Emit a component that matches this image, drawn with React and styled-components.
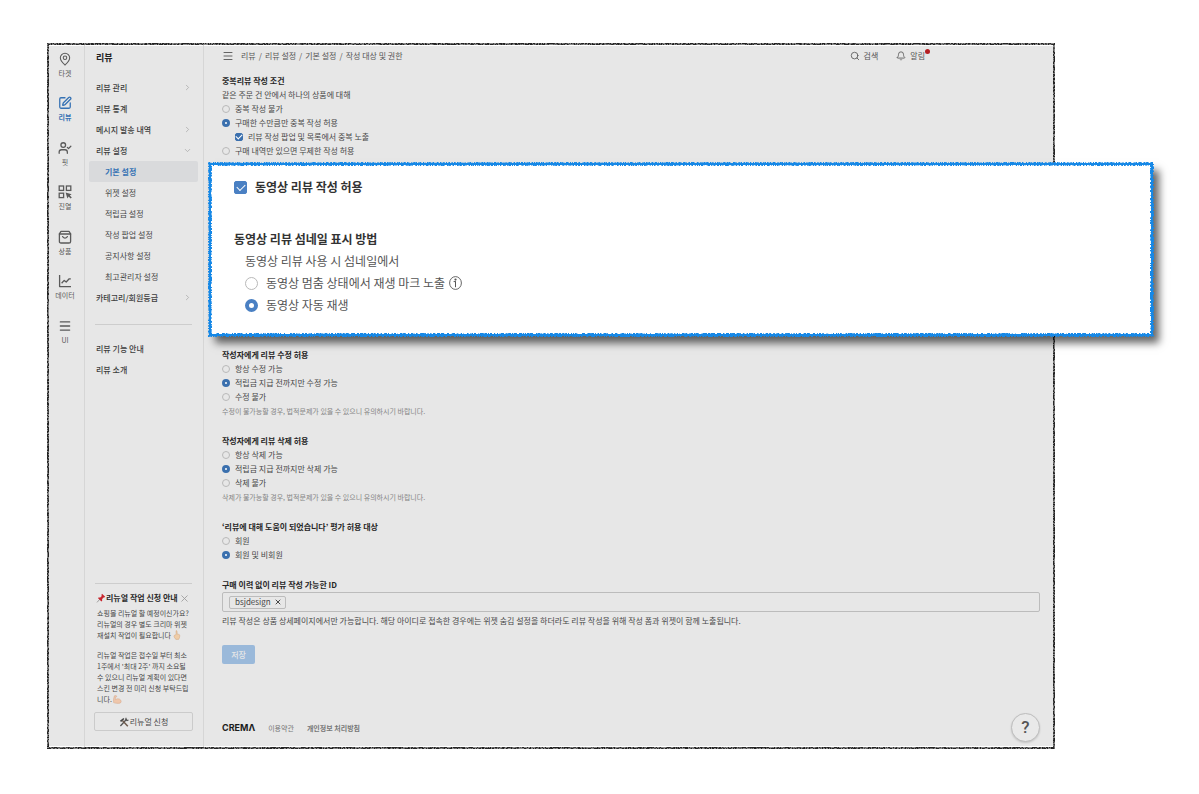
import React, { useState } from 'react';
import styled, { createGlobalStyle, css } from 'styled-components';
import { MapPin, SquarePen, UserCheck, Menu, Search, Bell, ChevronRight, ChevronDown, X } from 'lucide-react';

const GlobalStyle = createGlobalStyle`
    * {
        box-sizing: border-box;
    }

    body {
        margin: 0;
        background: #fff;
        color: #484848;
        font-family: 'Noto Sans CJK KR', sans-serif;
        font-size: 8px;
        line-height: 14px;
    }

    button, input {
        font: inherit;
        color: inherit;
        margin: 0;
    }

    a {
        color: inherit;
        text-decoration: none;
    }

    svg {
        flex-shrink: 0;
    }
`;

const Page = styled.div`
    padding: 43px 144px 45px 47px;
`;

const Frame = styled.div`
    position: relative;
    display: flex;
    min-height: calc(100vh - 88px);
    padding: 2px;
    background: #e7e7e7;
    box-shadow: inset 0 3px 0 #fff, inset 0 -3px 0 #fff;
`;

/* Sketchy outline drawn over the edge of its parent */
const OutlineSvg = styled.svg`
    position: absolute;
    inset: 0;
    width: 100%;
    height: 100%;
    overflow: visible;
    pointer-events: none;

    rect {
        width: calc(100% - 2px);
        height: calc(100% - 2px);
    }
`;

/* ---------- Icon rail ---------- */

const Rail = styled.nav`
    width: 36px;
    padding-right: 3px;
    border-right: 1px solid #d6d6d6;
`;

const RailList = styled.div`
    display: grid;
    grid-template-rows: repeat(7, 1fr);
    height: 317px;
    padding-top: 6px;
`;

const RailLink = styled.a`
    display: flex;
    flex-direction: column;
    align-items: center;
    font-size: 7px;
    line-height: 12px;
    color: ${({ $active }) => ($active ? '#3672b4' : '#5a5a5a')};
    font-weight: ${({ $active }) => ($active ? 700 : 400)};

    svg {
        width: 14px;
        height: 16px;
    }
`;

/* ---------- Sidebar menu ---------- */

const Sidebar = styled.aside`
    display: flex;
    flex-direction: column;
    width: 119px;
    padding: 6px 5px 16px 4px;
    border-right: 1px solid #d6d6d6;
`;

const SidebarTitle = styled.h1`
    margin: 0 0 12px;
    padding-left: 7px;
    font-size: 9px;
    line-height: 14px;
    color: #222;
`;

const MenuLink = styled.a`
    display: flex;
    align-items: center;
    justify-content: space-between;
    height: 21px;
    padding: 0 6px 0 7px;
    border-radius: 2px;
    font-weight: 500;
    color: #3c3c3c;

    svg {
        color: #a8a8a8;
    }

    ${({ $sub }) => $sub && css`
        padding-left: 16px;
        font-weight: 400;
        color: #484848;
    `}

    ${({ $active }) => $active && css`
        background: #d9dadc;
        font-weight: 700;
        color: #3672b4;
    `}
`;

const Divider = styled.hr`
    width: auto;
    height: 1px;
    margin: ${({ $spaced }) => ($spaced ? '16px 6px 13px' : '0 6px')};
    border: 0;
    background: #cdcdcd;
`;

const Notice = styled.section`
    margin-top: auto;
    font-size: 7px;
    line-height: 11px;

    p {
        margin: 0 0 9px;
        padding: 0 0 0 8px;
        white-space: nowrap;
    }

    p svg {
        vertical-align: -2px;
    }
`;

const NoticeHead = styled.header`
    display: flex;
    align-items: center;
    justify-content: space-between;
    margin: 7px 0 3px;
    padding: 0 8px 0 7px;

    h2 {
        display: flex;
        align-items: center;
        margin: 0;
        font-size: 8px;
        line-height: 14px;
        color: #2a2a2a;
    }
`;

const IconButton = styled.button`
    display: flex;
    padding: 0;
    border: 0;
    background: none;
    color: #999;
    cursor: pointer;
`;

const NoticeButton = styled.button`
    display: flex;
    align-items: center;
    justify-content: center;
    gap: 1px;
    width: calc(100% - 10px);
    height: 19px;
    margin: -2px 5px 0;
    padding: 0;
    border: 1px solid #cbcbcb;
    border-radius: 2px;
    background: transparent;
    font-size: 8px;
    cursor: pointer;
`;

/* ---------- Main ---------- */

const Main = styled.main`
    display: flex;
    flex: 1;
    flex-direction: column;
    min-width: 0;
    padding: 0 13px 5px 18px;
`;

const TopBar = styled.header`
    display: flex;
    align-items: center;
    height: 22px;
    margin-bottom: 7px;
    padding-right: 115px;
`;

const Breadcrumb = styled.nav`
    display: flex;
    gap: 3px;
    margin: 0 auto 0 7px;
    color: #555;
`;

const TopLink = styled.a`
    position: relative;
    display: flex;
    align-items: center;
    gap: 4px;
    margin-left: 18px;
    color: #555;
`;

const Dot = styled.span`
    position: absolute;
    top: 0;
    right: -5px;
    width: 5px;
    height: 5px;
    border-radius: 50%;
    background: #b51f24;
`;

const Group = styled.fieldset`
    min-width: 0;
    margin: 0 0 16px;
    padding: 0;
    border: 0;

    legend {
        padding: 0;
        font-weight: 700;
        color: #262626;
    }

    p {
        margin: 0;
    }
`;

const Hint = styled.p`
    font-size: 7px;
    color: #858585;
`;

const Option = styled.label`
    display: flex;
    align-items: center;
    gap: ${({ $large }) => ($large ? '8px' : '5px')};
    padding-left: ${({ $nested }) => ($nested ? '13px' : '0')};
    font-weight: ${({ $strong }) => ($strong ? 700 : 400)};
    color: ${({ $strong }) => ($strong ? '#333' : 'inherit')};
`;

const OptionText = styled.span`
    display: flex;
    align-items: center;
    gap: 4px;
`;

const Radio = styled.input.attrs({ type: 'radio' })`
    flex-shrink: 0;
    width: ${({ $large }) => ($large ? '13px' : '8px')};
    height: ${({ $large }) => ($large ? '13px' : '8px')};
    appearance: none;
    border: 1px solid #b9b9b9;
    border-radius: 50%;
    background: transparent;

    &:checked {
        border: ${({ $large }) => ($large ? '4px solid #4a80c3' : '3px solid #3b70ae')};
        background: #fff;
    }
`;

const Checkbox = styled.input.attrs({ type: 'checkbox' })`
    display: grid;
    place-items: center;
    flex-shrink: 0;
    width: ${({ $large }) => ($large ? '13px' : '8px')};
    height: ${({ $large }) => ($large ? '13px' : '8px')};
    appearance: none;
    border: 1px solid #b9b9b9;
    border-radius: 2px;

    &:checked {
        border-color: ${({ $large }) => ($large ? '#4a80c3' : '#3b70ae')};
        background: ${({ $large }) => ($large ? '#4a80c3' : '#3b70ae')};
    }

    &:checked::after {
        content: '';
        width: ${({ $large }) => ($large ? '7px' : '5px')};
        height: ${({ $large }) => ($large ? '4px' : '3px')};
        border: solid #fff;
        border-width: 0 0 1px 1px;
        transform: translateY(-1px) rotate(-45deg);
    }
`;

const Spotlight = styled.section`
    position: relative;
    z-index: 1;
    margin: -11px -113px 12px -13px;
    padding: 13px 24px 20px 25px;
    background: #fff;
    box-shadow: 6px 7px 8px rgba(0, 0, 0, 0.6);
    font-size: 12px;
    line-height: 22px;
    color: #555;

    ${Group} {
        margin: 30px 0 0;
    }

    legend {
        color: #333;
    }
`;

const Indent = styled.div`
    padding-left: 11px;
`;

const Field = styled.div`
    display: flex;
    align-items: center;
    height: 20px;
    margin-bottom: 2px;
    padding: 0 6px;
    border: 1px solid #bcbcbc;
    border-radius: 2px;

    input {
        flex: 1;
        min-width: 0;
        border: 0;
        outline: 0;
        background: transparent;
    }
`;

const Tag = styled.span`
    display: flex;
    align-items: center;
    gap: 3px;
    height: 13px;
    padding: 0 3px 0 5px;
    border: 1px solid #bcbcbc;
    border-radius: 2px;
`;

const FieldLabel = styled.label`
    font-weight: 700;
    color: #262626;
`;

const SaveButton = styled.button`
    width: 33px;
    height: 19px;
    margin-top: 17px;
    padding: 0;
    border: 0;
    border-radius: 2px;
    background: #9ab9da;
    color: #e7e7e7;
    font-weight: 500;
    line-height: 19px;
`;

const Footer = styled.footer`
    display: flex;
    align-items: center;
    gap: 13px;
    margin-top: auto;
    font-size: 7px;
    color: #777;
`;

const Logo = styled.a`
    font-family: Inter, sans-serif;
    font-size: 9px;
    font-weight: 700;
    color: #1c1c1c;
`;

const HelpButton = styled.button`
    width: 29px;
    height: 29px;
    margin-left: auto;
    padding: 0;
    border: 1px solid #bdbdbd;
    border-radius: 50%;
    background: #e9e9e9;
    box-shadow: 0 1px 2px rgba(0, 0, 0, 0.15);
    font-family: Roboto, sans-serif;
    font-size: 17px;
    font-weight: 500;
    line-height: 27px;
    color: #555;
`;

/* ---------- Drawings ---------- */

/* A thin solid core with a wider speckled stroke over it */
const Outline = ({ id, color, width, core, coreWidth }) => (
    <OutlineSvg aria-hidden="true">
        <filter id={id} x="-10" y="-10" width="3000" height="2000" filterUnits="userSpaceOnUse" colorInterpolationFilters="sRGB">
            <feTurbulence type="fractalNoise" baseFrequency="0.7" numOctaves="2" seed="4" />
            <feColorMatrix values="0 0 0 0 0  0 0 0 0 0  0 0 0 0 0  7 0 0 0 -2.9" result="speckle" />
            <feComposite in="SourceGraphic" in2="speckle" operator="in" />
        </filter>
        <rect x="1" y="1" fill="none" stroke={core} strokeWidth={coreWidth} />
        <rect x="1" y="1" fill="none" stroke={color} strokeWidth={width} filter={`url(#${id})`} />
    </OutlineSvg>
);

const stroke = { fill: 'none', stroke: 'currentColor', strokeWidth: 1.3 };

const DisplayIcon = () => (
    <svg viewBox="0 0 14 16" {...stroke}>
        <rect x="1.2" y="2" width="4.4" height="4.4" />
        <rect x="8.4" y="2" width="4.4" height="4.4" />
        <rect x="1.2" y="9.2" width="4.4" height="4.4" />
        <path d="M7.6 8.4l6 1.8-1.8 1.2 2 2-1.2 1.2-2-2-1.2 1.8z" fill="currentColor" stroke="none" />
    </svg>
);

const BagIcon = () => (
    <svg viewBox="0 0 14 16" {...stroke} strokeLinejoin="round" strokeLinecap="round">
        <path d="M1.4 4.8L3 2.4h8l1.6 2.4v7.6q0 1.6-1.6 1.6H3q-1.6 0-1.6-1.6z" />
        <path d="M1.4 5h11.2M4.6 7.6q2.4 3 4.8 0" />
    </svg>
);

const ChartIcon = () => (
    <svg viewBox="0 0 14 16" {...stroke} strokeLinejoin="round">
        <path d="M1.6 2v11.6H13M3.6 10.2l2.6-2.8 2 1.6 3-3.2h1.6" />
    </svg>
);

const PinIcon = () => (
    <svg width="10" height="10" viewBox="0 0 10 10">
        <path d="M4 6L1 9.4" stroke="#8d8d8d" strokeWidth="0.8" />
        <path d="M6 .8l3.2 3-1 .7-.6-.1-1.5 1.7.1 1.6-.8.8L1.9 5.1l.9-.7 1.5.1 1.5-1.6-.4-.9z" fill="#c8252d" />
    </svg>
);

const FingerIcon = () => (
    <svg width="8" height="10" viewBox="0 0 8 10">
        <path d="M3 .8q.8-.5 1 .4l.3 3 1.2.1q1.4.2 1.3 1.5L6.4 8 5.6 9.4H2.8L1 6.8l.4-1.6 1.7-.6z" fill="#efcda8" stroke="#c99a6f" strokeWidth="0.4" />
    </svg>
);

const MuscleIcon = () => (
    <svg width="9" height="9" viewBox="0 0 9 9">
        <path d="M1.4.8l1.8-.2.6 1.1-1.3.6-.2 2.4q2-1.6 4.1-.7 2 .9 1.8 2.9-.3 1.6-3.4 1.5Q2 8.4.6 7.6 0 4 1.4.8z" fill="#efc7ac" stroke="#cf9c7c" strokeWidth="0.4" />
    </svg>
);

const ToolsIcon = () => (
    <svg width="10" height="10" viewBox="0 0 10 10" fill="none">
        <path d="M1.4 9L7.8 2" stroke="#555" strokeWidth="1.3" />
        <path d="M7 .8l-.2 1.9 1.2.9 1.5-.7" stroke="#555" strokeWidth="1.1" />
        <path d="M3.4 3.4l5.4 5.8" stroke="#6e5a4c" strokeWidth="1.5" />
        <path d="M.9 3.8L4.4.9l1 1.2-3.3 3z" fill="#444" />
    </svg>
);

const InfoIcon = () => (
    <svg width="13" height="14" viewBox="0 0 13 14" fill="none" stroke="#555">
        <ellipse cx="6.5" cy="7" rx="5.9" ry="6.4" strokeWidth="0.9" />
        <path d="M6.5 5.2v6M4.6 5.6h1.9" strokeWidth="1" />
        <circle cx="6.5" cy="3.6" r="1.1" fill="#555" stroke="none" />
    </svg>
);

/* ---------- Data ---------- */

const railItems = [
    { label: '타겟', icon: <MapPin strokeWidth={1.8} /> },
    { label: '리뷰', icon: <SquarePen strokeWidth={2.2} />, active: true },
    { label: '핏', icon: <UserCheck strokeWidth={2.2} /> },
    { label: '진열', icon: <DisplayIcon /> },
    { label: '상품', icon: <BagIcon /> },
    { label: '데이터', icon: <ChartIcon /> },
    { label: 'UI', icon: <Menu strokeWidth={2.2} /> },
];

const menuItems = [
    { label: '리뷰 관리', arrow: 'right' },
    { label: '리뷰 통계' },
    { label: '메시지 발송 내역', arrow: 'right' },
    { label: '리뷰 설정', arrow: 'down' },
    { label: '기본 설정', sub: true, active: true },
    { label: '위젯 설정', sub: true },
    { label: '적립금 설정', sub: true },
    { label: '작성 팝업 설정', sub: true },
    { label: '공지사항 설정', sub: true },
    { label: '최고관리자 설정', sub: true },
    { label: '카테고리/회원등급', arrow: 'right' },
];

const thumbnailOptions = [
    { label: '동영상 멈춤 상태에서 재생 마크 노출', info: true },
    { label: '동영상 자동 재생' },
];

const editOptions = [
    { label: '항상 수정 가능' },
    { label: '적립금 지급 전까지만 수정 가능' },
    { label: '수정 불가' },
];

const deleteOptions = [
    { label: '항상 삭제 가능' },
    { label: '적립금 지급 전까지만 삭제 가능' },
    { label: '삭제 불가' },
];

const helpfulOptions = [{ label: '회원' }, { label: '회원 및 비회원' }];

// The second option is the default in every group
const RadioList = ({ name, options, large }) => {
    const [value, setValue] = useState(1);

    return options.map(({ label, info }, i) => (
        <Option key={label} $large={large}>
            <Radio name={name} $large={large} checked={value === i} onChange={() => setValue(i)} />
            <OptionText>
                {label}
                {info && <InfoIcon />}
            </OptionText>
        </Option>
    ));
};

const App = () => {
    const [duplicate, setDuplicate] = useState(1);

    return (
        <Page>
            <GlobalStyle />
            <Frame>
                <Outline id="rough-frame" color="#222" width={2} core="#8a8a8a" coreWidth={2} />
                <Rail>
                    <RailList>
                        {railItems.map(({ label, icon, active }) => (
                            <RailLink key={label} href="#" $active={active}>
                                {icon}
                                {label}
                            </RailLink>
                        ))}
                    </RailList>
                </Rail>

                <Sidebar>
                    <SidebarTitle>리뷰</SidebarTitle>
                    {menuItems.map(({ label, arrow, sub, active }) => (
                        <MenuLink key={label} href="#" $sub={sub} $active={active}>
                            {label}
                            {arrow === 'right' && <ChevronRight size={9} />}
                            {arrow === 'down' && <ChevronDown size={9} />}
                        </MenuLink>
                    ))}
                    <Divider $spaced />
                    <MenuLink href="#">리뷰 기능 안내</MenuLink>
                    <MenuLink href="#">리뷰 소개</MenuLink>

                    <Notice>
                        <Divider />
                        <NoticeHead>
                            <h2><PinIcon />리뉴얼 작업 신청 안내</h2>
                            <IconButton aria-label="닫기"><X size={11} strokeWidth={1.8} /></IconButton>
                        </NoticeHead>
                        <p>
                            쇼핑몰 리뉴얼 할 예정이신가요?<br />
                            리뉴얼의 경우 별도 크리마 위젯<br />
                            재설치 작업이 필요합니다 <FingerIcon />
                        </p>
                        <p>
                            리뉴얼 작업은 접수일 부터 최소<br />
                            1주에서 '최대 2주' 까지 소요될<br />
                            수 있으니 리뉴얼 계획이 있다면<br />
                            스킨 변경 전 미리 신청 부탁드립<br />
                            니다. <MuscleIcon />
                        </p>
                        <NoticeButton><ToolsIcon />리뉴얼 신청</NoticeButton>
                    </Notice>
                </Sidebar>

                <Main>
                    <TopBar>
                        <IconButton aria-label="메뉴"><Menu size={12} strokeWidth={1.8} color="#555" /></IconButton>
                        <Breadcrumb>
                            <a href="#">리뷰</a>/
                            <a href="#">리뷰 설정</a>/
                            <a href="#">기본 설정</a>/
                            <a href="#">작성 대상 및 권한</a>
                        </Breadcrumb>
                        <TopLink href="#"><Search size={10} />검색</TopLink>
                        <TopLink href="#"><Bell size={10} />알림<Dot /></TopLink>
                    </TopBar>

                    <Group>
                        <legend>중복리뷰 작성 조건</legend>
                        <p>같은 주문 건 안에서 하나의 상품에 대해</p>
                        <Option>
                            <Radio name="duplicate" checked={duplicate === 0} onChange={() => setDuplicate(0)} />
                            중복 작성 불가
                        </Option>
                        <Option>
                            <Radio name="duplicate" checked={duplicate === 1} onChange={() => setDuplicate(1)} />
                            구매한 수만큼만 중복 작성 허용
                        </Option>
                        <Option $nested>
                            <Checkbox defaultChecked />
                            리뷰 작성 팝업 및 목록에서 중복 노출
                        </Option>
                        <Option>
                            <Radio name="duplicate" checked={duplicate === 2} onChange={() => setDuplicate(2)} />
                            구매 내역만 있으면 무제한 작성 허용
                        </Option>
                    </Group>

                    <Spotlight>
                        <Outline id="rough-spotlight" color="#1688e6" width={4} core="#1688e6" coreWidth={2} />
                        <Option $large $strong>
                            <Checkbox $large defaultChecked />
                            동영상 리뷰 작성 허용
                        </Option>
                        <Group>
                            <legend>동영상 리뷰 섬네일 표시 방법</legend>
                            <Indent>
                                <p>동영상 리뷰 사용 시 섬네일에서</p>
                                <RadioList name="thumbnail" large options={thumbnailOptions} />
                            </Indent>
                        </Group>
                    </Spotlight>

                    <Group>
                        <legend>작성자에게 리뷰 수정 허용</legend>
                        <RadioList name="edit" options={editOptions} />
                        <Hint>수정이 불가능할 경우, 법적문제가 있을 수 있으니 유의하시기 바랍니다.</Hint>
                    </Group>

                    <Group>
                        <legend>작성자에게 리뷰 삭제 허용</legend>
                        <RadioList name="delete" options={deleteOptions} />
                        <Hint>삭제가 불가능할 경우, 법적문제가 있을 수 있으니 유의하시기 바랍니다.</Hint>
                    </Group>

                    <Group>
                        <legend>‘리뷰에 대해 도움이 되었습니다’ 평가 허용 대상</legend>
                        <RadioList name="helpful" options={helpfulOptions} />
                    </Group>

                    <FieldLabel htmlFor="reviewer-id">구매 이력 없이 리뷰 작성 가능한 ID</FieldLabel>
                    <Field>
                        <Tag>bsjdesign <X size={8} strokeWidth={3} /></Tag>
                        <input id="reviewer-id" type="text" />
                    </Field>
                    <div>리뷰 작성은 상품 상세페이지에서만 가능합니다. 해당 아이디로 접속한 경우에는 위젯 숨김 설정을 하더라도 리뷰 작성을 위해 작성 폼과 위젯이 함께 노출됩니다.</div>
                    <SaveButton disabled>저장</SaveButton>

                    <Footer>
                        <Logo href="#">CREMΛ</Logo>
                        <a href="#">이용약관</a>
                        <a href="#"><b>개인정보 처리방침</b></a>
                        <HelpButton aria-label="도움말">?</HelpButton>
                    </Footer>
                </Main>
            </Frame>
        </Page>
    );
};

export default App;
